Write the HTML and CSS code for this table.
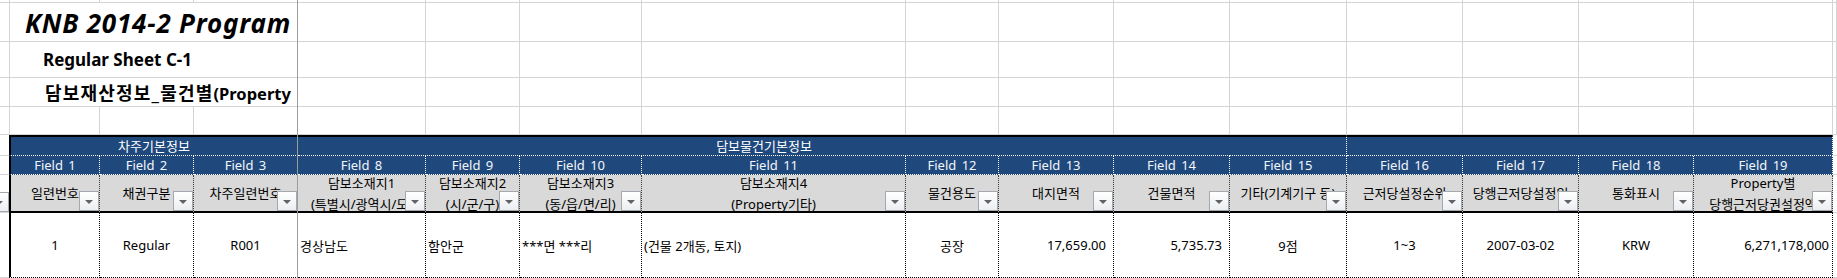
FILE: index.html
```html
<!DOCTYPE html>
<html lang="ko">
<head>
<meta charset="utf-8">
<title>KNB 2014-2 Program</title>
<link rel="stylesheet" href="styles.css">
</head>
<body>
<div class="sheet">
  <div class="top">
    <div class="c"></div><div class="c"></div><div class="c"></div><div class="c"></div><div class="c"></div><div class="c"></div><div class="c"></div><div class="c"></div><div class="c"></div><div class="c"></div><div class="c"></div><div class="c"></div><div class="c"></div><div class="c"></div><div class="c"></div><div class="c"></div><div class="c"></div>

    <div class="c"></div>
    <div class="c span3 title"><span>KNB 2014-2 Program</span></div>
    <div class="c"></div><div class="c"></div><div class="c"></div><div class="c"></div><div class="c"></div><div class="c"></div><div class="c"></div><div class="c"></div><div class="c"></div><div class="c"></div><div class="c"></div><div class="c"></div><div class="c"></div>

    <div class="c"></div>
    <div class="c span3 sub"><span>Regular Sheet C-1</span></div>
    <div class="c"></div><div class="c"></div><div class="c"></div><div class="c"></div><div class="c"></div><div class="c"></div><div class="c"></div><div class="c"></div><div class="c"></div><div class="c"></div><div class="c"></div><div class="c"></div><div class="c"></div>

    <div class="c"></div>
    <div class="c span3 sub sub-ko"><span>담보재산정보_물건별<span class="lat">(Property</span></span></div>
    <div class="c"></div><div class="c"></div><div class="c"></div><div class="c"></div><div class="c"></div><div class="c"></div><div class="c"></div><div class="c"></div><div class="c"></div><div class="c"></div><div class="c"></div><div class="c"></div><div class="c"></div>

    <div class="c"></div><div class="c"></div><div class="c"></div><div class="c"></div><div class="c"></div><div class="c"></div><div class="c"></div><div class="c"></div><div class="c"></div><div class="c"></div><div class="c"></div><div class="c"></div><div class="c"></div><div class="c"></div><div class="c"></div><div class="c"></div><div class="c"></div>
  </div>

  <div class="tbl">
    <!-- group row -->
    <div class="st"></div>
    <div class="g first span-g1"><span>차주기본정보</span></div>
    <div class="g span-g2 noright"><span>담보물건기본정보</span></div>
    <div class="g"></div>
    <div class="g span-g3"></div>
    <div class="st"></div>

    <!-- field row -->
    <div class="st"></div>
    <div class="f first">Field 1</div>
    <div class="f">Field 2</div>
    <div class="f">Field 3</div>
    <div class="f">Field 8</div>
    <div class="f">Field 9</div>
    <div class="f">Field 10</div>
    <div class="f">Field 11</div>
    <div class="f">Field 12</div>
    <div class="f">Field 13</div>
    <div class="f">Field 14</div>
    <div class="f">Field 15</div>
    <div class="f">Field 16</div>
    <div class="f">Field 17</div>
    <div class="f">Field 18</div>
    <div class="f">Field 19</div>
    <div class="st"></div>

    <!-- header row -->
    <div class="st st-h"><span class="fb"></span></div>
    <div class="h first"><div class="ln">일련번호</div><span class="fb"></span></div>
    <div class="h"><div class="ln">채권구분</div><span class="fb"></span></div>
    <div class="h"><div class="ln">차주일련번호</div><span class="fb"></span></div>
    <div class="h"><div class="ln">담보소재지1</div><div class="ln">(특별시/광역시/도)</div><span class="fb"></span></div>
    <div class="h"><div class="ln">담보소재지2</div><div class="ln">(시/군/구)</div><span class="fb"></span></div>
    <div class="h"><div class="ln">담보소재지3</div><div class="ln">(동/읍/면/리)</div><span class="fb"></span></div>
    <div class="h"><div class="ln">담보소재지4</div><div class="ln">(Property기타)</div><span class="fb"></span></div>
    <div class="h"><div class="ln">물건용도</div><span class="fb"></span></div>
    <div class="h"><div class="ln">대지면적</div><span class="fb"></span></div>
    <div class="h"><div class="ln">건물면적</div><span class="fb"></span></div>
    <div class="h"><div class="ln">기타(기계기구 등)</div><span class="fb"></span></div>
    <div class="h"><div class="ln">근저당설정순위</div><span class="fb"></span></div>
    <div class="h"><div class="ln">당행근저당설정일</div><span class="fb"></span></div>
    <div class="h"><div class="ln">통화표시</div><span class="fb"></span></div>
    <div class="h"><div class="ln">Property별</div><div class="ln">당행근저당권설정액</div><span class="fb"></span></div>
    <div class="st st-h"></div>

    <!-- data row -->
    <div class="st"></div>
    <div class="d first ctr">1</div>
    <div class="d ctr">Regular</div>
    <div class="d ctr">R001</div>
    <div class="d lft">경상남도</div>
    <div class="d lft">함안군</div>
    <div class="d lft">***면 ***리</div>
    <div class="d lft">(건물 2개동, 토지)</div>
    <div class="d ctr">공장</div>
    <div class="d rgt">17,659.00</div>
    <div class="d rgt">5,735.73</div>
    <div class="d ctr">9점</div>
    <div class="d ctr">1~3</div>
    <div class="d ctr">2007-03-02</div>
    <div class="d ctr">KRW</div>
    <div class="d rgt rgt-tight">6,271,178,000</div>
    <div class="st"></div>
  </div>

  <div class="freeze"></div>
</div>
</body>
</html>
```

FILE: styles.css
```css
* { box-sizing: border-box; }

html, body {
  margin: 0;
  padding: 0;
  background: #ffffff;
}

body {
  width: 1837px;
  height: 278px;
  overflow: hidden;
  font-family: "Noto Sans", "Noto Sans CJK KR", sans-serif;
  color: #000;
}

.sheet {
  position: relative;
  width: 1837px;
  height: 278px;
  display: flex;
  flex-direction: column;
}

/* ---------- upper (plain sheet) area ---------- */
.top {
  display: grid;
  grid-template-columns: 10px 90px 94px 104px 128px 94px 122px 264px 93px 115px 116px 117px 116px 116px 115px 139px 1fr;
  grid-template-rows: 3px 39px 36px 29px 28px;
}

.c {
  border-right: 1px solid #d4d4d4;
  border-bottom: 1px solid #d4d4d4;
  min-width: 0;
}

.span3 {
  grid-column: span 3;
  display: flex;
  align-items: center;
  overflow: hidden;
  white-space: nowrap;
}

.title {
  padding-left: 15px;
  font-family: "Noto Sans", "Noto Sans CJK KR", sans-serif;
  font-weight: 700;
  font-style: italic;
  font-size: 26px;
  letter-spacing: 0.8px;
}

.title span { transform: translateY(1px); }

.sub {
  padding-left: 33px;
  font-weight: 700;
  font-size: 17px;
}

.sub-ko {
  padding-left: 35px;
  font-size: 18px;
  letter-spacing: 1.2px;
}

.sub-ko .lat {
  font-size: 16.5px;
  letter-spacing: 0;
}

/* ---------- table area ---------- */
.tbl {
  display: grid;
  grid-template-columns: 9px 91px 94px 104px 128px 94px 122px 264px 93px 115px 116px 117px 116px 116px 115px 139px 1fr;
  grid-template-rows: 21px 19px 38px 65px;
  font-size: 13px;
}

.tbl > div {
  min-width: 0;
}

.st {
  border-bottom: 1px solid #d4d4d4;
  position: relative;
  overflow: hidden;
}

.first {
  border-left: 2px solid #000 !important;
}

/* group row */
.g {
  background: #1f497d;
  color: #fff;
  border-top: 2px solid #000;
  border-bottom: 1px dotted #ffffff;
  border-right: 1px dotted #ffffff;
  display: flex;
  align-items: center;
  justify-content: center;
  line-height: 1;
}

.g.noright { border-right: none; }
.span-g1 { grid-column: span 3; }
.span-g2 { grid-column: span 7; }
.span-g3 { grid-column: span 4; }

/* field row */
.f {
  background: #1f497d;
  color: #f4f6fa;
  border-bottom: 1px dotted #ffffff;
  border-right: 1px dotted #ffffff;
  display: flex;
  align-items: center;
  justify-content: center;
  white-space: nowrap;
  word-spacing: 2px;
  line-height: 1;
}

/* header row */
.h {
  position: relative;
  background: #d9d9d9;
  border-bottom: 2px solid #000;
  border-right: 1px dotted #3a3a3a;
  display: flex;
  flex-direction: column;
  justify-content: center;
  overflow: hidden;
  line-height: 21px;
  padding-top: 1px;
}

.st-h {
  border-bottom: 1px solid #d4d4d4;
}

.ln {
  display: flex;
  justify-content: center;
  white-space: nowrap;
}

.fb {
  position: absolute;
  right: 0;
  bottom: 0;
  width: 20px;
  height: 20px;
  border: 1px solid #a4a9b0;
  background: linear-gradient(#ffffff, #eceef1);
}

.fb::after {
  content: "";
  position: absolute;
  left: 5px;
  top: 8px;
  border-left: 4px solid transparent;
  border-right: 4px solid transparent;
  border-top: 4px solid #606266;
}

/* data row */
.d {
  background: #fff;
  border-right: 1px dotted #000;
  border-bottom: 1px dotted #000;
  display: flex;
  align-items: center;
  white-space: nowrap;
  overflow: hidden;
  font-size: 13px;
}

.ctr { justify-content: center; }
.lft { justify-content: flex-start; padding-left: 2px; }
.rgt { justify-content: flex-end; padding-right: 7px; }
.rgt-tight { padding-right: 3px; }

/* frozen pane divider */
.freeze {
  position: absolute;
  left: 297px;
  top: 0;
  bottom: 0;
  width: 1px;
  background: #9c9c9c;
}
```
